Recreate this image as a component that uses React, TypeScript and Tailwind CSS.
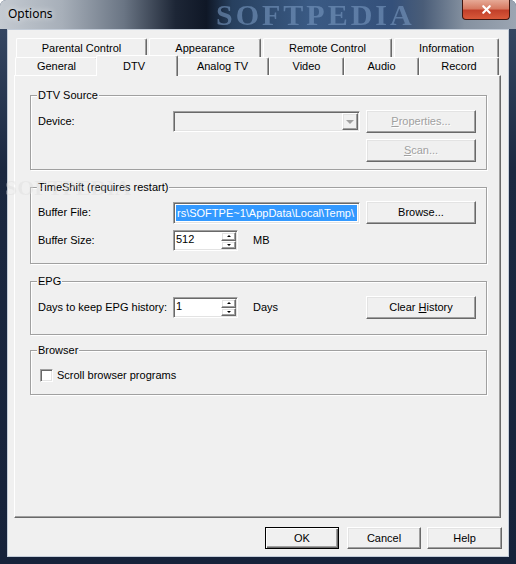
import type { ReactNode } from 'react'
import { X } from 'lucide-react'

const raised =
  'border border-t-white border-l-white border-r-[#696969] border-b-[#696969] shadow-[inset_-1px_-1px_0_#a0a0a0,inset_1px_1px_0_#e3e3e3]'
const sunken =
  'border border-t-[#a0a0a0] border-l-[#a0a0a0] border-r-white border-b-white shadow-[inset_1px_1px_0_#696969,inset_-1px_-1px_0_#e3e3e3]'

function Btn({
  children,
  w = 'w-[110px]',
  h = 'h-[23px]',
  disabled,
  def,
}: {
  children: ReactNode
  w?: string
  h?: string
  disabled?: boolean
  def?: boolean
}) {
  return (
    <div
      className={`${w} ${h} shrink-0 flex items-center justify-center bg-[#f0f0f0] ${
        def
          ? 'border border-black shadow-[inset_1px_1px_0_#fff,inset_-1px_-1px_0_#696969,inset_-2px_-2px_0_#a0a0a0]'
          : raised
      } ${disabled ? 'text-[#a0a0a0] [text-shadow:1px_1px_0_#fff]' : 'text-black'}`}
    >
      {children}
    </div>
  )
}

function Tab({ label, w, active }: { label: string; w: string; active?: boolean }) {
  if (active) {
    return (
      <div
        className={`${w} relative z-10 -mt-[2px] -mx-[2px] h-[21px] bg-[#f0f0f0] border-t border-l border-r border-t-white border-l-white border-r-[#696969] rounded-t-[2px] shadow-[inset_-1px_0_0_#a0a0a0] flex justify-center pt-[2px] pr-[6px]`}
      >
        {label}
      </div>
    )
  }
  return (
    <div
      className={`${w} h-full shrink-0 bg-[#f0f0f0] border-t border-l border-r border-t-white border-l-white border-r-[#696969] rounded-t-[2px] shadow-[inset_-1px_0_0_#a0a0a0] flex items-center justify-center`}
    >
      {label}
    </div>
  )
}

function Group({ title, className, children }: { title: string; className: string; children?: ReactNode }) {
  return (
    <div
      className={`relative w-[457px] border border-[#a0a0a0] shadow-[inset_1px_1px_0_#fff,1px_1px_0_#fff] ${className}`}
    >
      <span className="absolute -top-[8px] left-[6px] bg-[#f0f0f0] px-[1px] leading-[14px]">{title}</span>
      {children}
    </div>
  )
}

function Spin({ value }: { value: string }) {
  return (
    <div className={`w-[65px] h-[21px] bg-white flex ${sunken}`}>
      <span className="flex-1 pl-[2px] pt-[2px] leading-[13px]">{value}</span>
      <div className="w-[15px] flex flex-col py-[1px] mr-[1px]">
        <div className={`flex-1 flex items-center justify-center ${raised}`}>
          <div className="w-0 h-0 border-x-[2px] border-x-transparent border-b-[2px] border-b-black" />
        </div>
        <div className={`flex-1 flex items-center justify-center ${raised}`}>
          <div className="w-0 h-0 border-x-[2px] border-x-transparent border-t-[2px] border-t-black" />
        </div>
      </div>
    </div>
  )
}

export default function App() {
  return (
    <div className="w-[516px] h-[564px] flex flex-col overflow-hidden rounded-t-[6px] bg-[linear-gradient(180deg,#3a4c68_0%,#1b2840_30%,#16223a_100%)] font-['Liberation_Sans',Arial,sans-serif] text-[11px] text-black">
      {/* title bar */}
      <div className="relative h-[29px] shrink-0 bg-[linear-gradient(90deg,#c4cad1_0%,#a7afb9_12%,#6a7584_24%,#1d2636_34%,#0f1726_40%,#27405f_45%,#3a5a84_60%,#34507a_76%,#4a5d78_82%,#8591a0_90%,#9ba5b2_100%)]">
        <span className="absolute left-[216px] top-0 font-['Liberation_Serif',serif] font-bold text-[30px] leading-[30px] tracking-[3px] text-[#7898c0] opacity-60">
          SOFTPEDIA
        </span>
        <span className="absolute left-[8px] top-[6px] font-['Noto_Sans',sans-serif] text-[12px] leading-[16px] text-black [text-shadow:0_0_6px_#fff]">
          Options
        </span>
        <div className="absolute right-[6px] top-0 w-[48px] h-[20px] rounded-b-[4px] border border-t-0 border-[#40160f] bg-[linear-gradient(180deg,#e6a996_0%,#d67a62_45%,#c2402a_55%,#d9593a_100%)] flex items-center justify-center">
          <X className="w-[13px] h-[13px] text-white" strokeWidth={4} />
        </div>
      </div>

      <div className="flex-1 flex px-[7px] pb-[7px]">
        <div className="relative flex-1 flex flex-col border border-[#c3ccd8] bg-[#f0f0f0] pl-[6px] pr-[7px] pt-[8px] pb-[7px]">
          {/* tab rows */}
          <div className="flex h-[19px] pl-[2px] gap-[2px]">
            <Tab label="Parental Control" w="w-[131px]" />
            <Tab label="Appearance" w="w-[112px]" />
            <Tab label="Remote Control" w="w-[129px]" />
            <Tab label="Information" w="w-[105px]" />
          </div>
          <div className="flex h-[18px] pl-[1px] items-start">
            <Tab label="General" w="w-[83px]" />
            <Tab label="DTV" w="w-[82px]" active />
            <Tab label="Analog TV" w="w-[93px]" />
            <Tab label="Video" w="w-[75px]" />
            <Tab label="Audio" w="w-[75px]" />
            <Tab label="Record" w="w-[80px]" />
          </div>

          {/* tab page */}
          <div className="relative h-[443px] border border-t-white border-l-white border-r-[#696969] border-b-[#696969] shadow-[inset_-1px_-1px_0_#a0a0a0] pl-[15px] pt-[19px] flex flex-col">
            <Group title="DTV Source" className="pt-[14px] pb-[7px] pl-[7px] pr-[10px] flex flex-col gap-[6px]">
              <div className="flex items-center h-[23px]">
                <span className="w-[135px]">Device:</span>
                <div className={`w-[187px] h-[21px] bg-[#f0f0f0] flex justify-end items-center pr-[1px] ${sunken}`}>
                  <div className={`w-[16px] h-[17px] flex items-center justify-center ${raised}`}>
                    <div className="w-0 h-0 border-x-[4px] border-x-transparent border-t-[4px] border-t-[#a0a0a0]" />
                  </div>
                </div>
                <div className="ml-[6px]">
                  <Btn disabled>
                    <span>
                      <u>P</u>roperties...
                    </span>
                  </Btn>
                </div>
              </div>
              <div className="flex justify-end h-[23px]">
                <Btn disabled>
                  <span>
                    <u>S</u>can...
                  </span>
                </Btn>
              </div>
            </Group>

            <Group
              title="TimeShift (requires restart)"
              className="mt-[17px] pt-[13px] pb-[12px] pl-[7px] pr-[10px] flex flex-col gap-[6px]"
            >
              <div className="flex items-center h-[23px]">
                <span className="w-[135px]">Buffer File:</span>
                <div className={`w-[187px] h-[22px] bg-white p-[2px] ${sunken}`}>
                  <div className="h-full bg-[#3399ff] text-white overflow-hidden whitespace-nowrap leading-[16px] pl-[1px]">
                    rs\SOFTPE~1\AppData\Local\Temp\
                  </div>
                </div>
                <div className="ml-[6px]">
                  <Btn>Browse...</Btn>
                </div>
              </div>
              <div className="flex items-center h-[21px]">
                <span className="w-[135px]">Buffer Size:</span>
                <Spin value="512" />
                <span className="ml-[15px]">MB</span>
              </div>
            </Group>

            <Group title="EPG" className="mt-[17px] pt-[14px] pb-[15px] pl-[7px] pr-[10px]">
              <div className="flex items-center h-[23px]">
                <span className="w-[135px]">Days to keep EPG history:</span>
                <Spin value="1" />
                <span className="ml-[15px]">Days</span>
                <div className="ml-auto">
                  <Btn>
                    <span>
                      Clear <u>H</u>istory
                    </span>
                  </Btn>
                </div>
              </div>
            </Group>

            <Group title="Browser" className="mt-[15px] pt-[18px] pb-[12px] pl-[9px]">
              <div className="flex items-center h-[13px] gap-[4px]">
                <div className={`w-[13px] h-[13px] bg-white ${sunken}`} />
                <span>Scroll browser programs</span>
              </div>
            </Group>
          </div>

          {/* dialog buttons */}
          <div className="flex justify-end mt-[9px] -mr-[1px]">
            <Btn w="w-[74px]" h="h-[22px]" def>
              OK
            </Btn>
            <div className="ml-[8px]">
              <Btn w="w-[74px]" h="h-[22px]">
                Cancel
              </Btn>
            </div>
            <div className="ml-[6px]">
              <Btn w="w-[75px]" h="h-[22px]">
                Help
              </Btn>
            </div>
          </div>

          {/* faint watermark over the page */}
          <span className="absolute -left-[3px] top-[146px] z-20 font-['Liberation_Serif',serif] font-bold text-[22px] leading-[24px] text-[#dcdcdc] opacity-40 pointer-events-none">
            SOFTPEDIA
          </span>
        </div>
      </div>
    </div>
  )
}
